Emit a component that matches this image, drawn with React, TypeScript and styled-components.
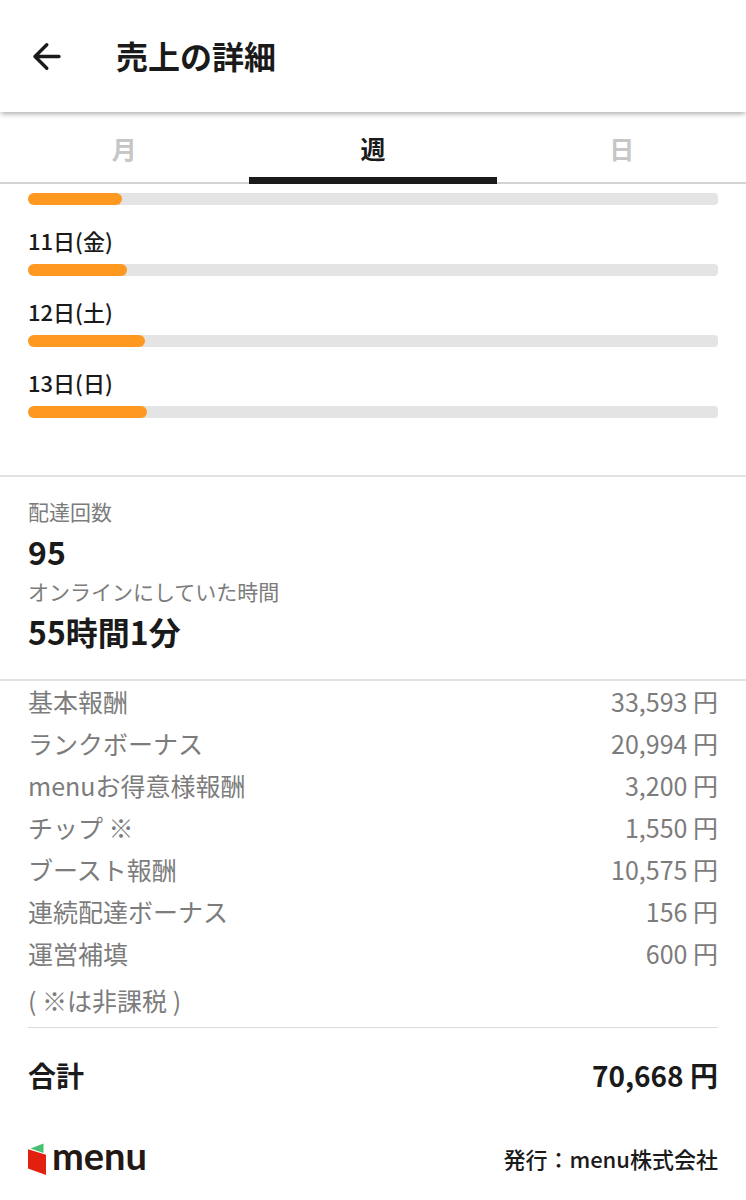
import React, { useState } from "react";
import styled, { createGlobalStyle } from "styled-components";

const ink = "#1a1a1a";
const grey = "#7c7c7c";

const GlobalStyle = createGlobalStyle`
  *, *::before, *::after { box-sizing: border-box; }
  body {
    margin: 0;
    background: #fff;
    color: ${ink};
    font-family: "Noto Sans CJK JP", sans-serif;
  }
`;

const Screen = styled.div`
  display: flex;
  flex-direction: column;
  min-height: 100vh;
`;

const Header = styled.header`
  position: relative;
  display: flex;
  align-items: center;
  gap: 48px;
  height: 112px;
  padding: 0 28px;
  background: #fff;
  box-shadow: 0 3px 5px -1px rgba(0, 0, 0, 0.32);
`;

const BackButton = styled.button`
  display: flex;
  width: 40px;
  height: 40px;
  padding: 0;
  border: 0;
  background: none;
  color: ${ink};
  cursor: pointer;
`;

const Title = styled.h1`
  margin: 0;
  padding-bottom: 2px;
  font-size: 32px;
  line-height: 48px;
  font-weight: 700;
`;

const Tabs = styled.div`
  display: grid;
  grid-template-columns: repeat(3, 1fr);
  height: 72px;
  box-shadow: inset 0 -2px 0 #d2d2d2;
`;

const Tab = styled.button<{ $active: boolean }>`
  padding: 7px 0 0;
  border: 0;
  border-bottom: 7px solid ${(p) => (p.$active ? ink : "transparent")};
  background: none;
  color: ${(p) => (p.$active ? ink : "#c6c6c6")};
  font-family: inherit;
  font-size: 25px;
  line-height: 36px;
  font-weight: 700;
  cursor: pointer;
`;

const Days = styled.ul`
  display: flex;
  flex-direction: column;
  gap: 21px;
  margin: 0;
  padding: 9px 28px 57px;
  list-style: none;
  border-bottom: 2px solid #e2e2e2;
`;

const Day = styled.li`
  display: flex;
  flex-direction: column;
  gap: 10px;
`;

const DayLabel = styled.span`
  font-size: 22px;
  line-height: 28px;
  font-weight: 500;
`;

const Track = styled.div`
  height: 12px;
  border-radius: 6px 4px 4px 6px;
  background: #e4e4e4;
`;

const Fill = styled.div`
  height: 100%;
  border-radius: 6px;
  background: #ff9820;
`;

const Stats = styled.dl`
  margin: 0;
  padding: 18px 28px 24px;
  border-bottom: 2px solid #e2e2e2;
`;

const StatLabel = styled.dt`
  color: ${grey};
  font-size: 21px;
  line-height: 32px;
`;

const StatValue = styled.dd`
  margin: 0;
  font-size: 32px;
  line-height: 48px;
  font-weight: 700;
`;

const Breakdown = styled.section`
  padding: 0 28px;
`;

const Table = styled.table`
  width: 100%;
  border-collapse: collapse;
  color: ${grey};
  font-size: 25px;
  line-height: 40px;
`;

const ItemName = styled.th`
  padding: 0 0 2px;
  font-weight: 400;
  text-align: left;
`;

const ItemAmount = styled.td`
  padding: 0 0 2px;
  text-align: right;
`;

const Note = styled.p`
  margin: 0;
  padding: 5px 0 7px;
  border-bottom: 1px solid #dcdcdc;
  color: ${grey};
  font-size: 25px;
  line-height: 40px;
`;

const Total = styled.div`
  display: flex;
  justify-content: space-between;
  padding: 26px 0 28px;
  font-size: 28px;
  line-height: 42px;
  font-weight: 700;
`;

const Footer = styled.footer`
  display: flex;
  align-items: center;
  justify-content: space-between;
  padding: 11px 28px 20px;
`;

const Issuer = styled.span`
  font-size: 22px;
  line-height: 32px;
  font-weight: 500;
`;

const LogoRow = styled.div`
  display: flex;
  align-items: center;
  gap: 6px;
`;

const LogoWord = styled.span`
  padding-bottom: 6px;
  color: #231815;
  font-family: Lato, sans-serif;
  font-size: 38px;
  line-height: 40px;
  font-weight: 700;
`;

const tabNames = ["月", "週", "日"];

const days = [
  { label: "", name: "10日(木)", percent: 13.6 },
  { label: "11日(金)", name: "11日(金)", percent: 14.3 },
  { label: "12日(土)", name: "12日(土)", percent: 16.9 },
  { label: "13日(日)", name: "13日(日)", percent: 17.2 },
];

const items = [
  ["基本報酬", "33,593 円"],
  ["ランクボーナス", "20,994 円"],
  ["menuお得意様報酬", "3,200 円"],
  ["チップ ※", "1,550 円"],
  ["ブースト報酬", "10,575 円"],
  ["連続配達ボーナス", "156 円"],
  ["運営補填", "600 円"],
];

function BackIcon() {
  return (
    <svg width="40" height="40" viewBox="0 0 40 40" fill="none" stroke="currentColor" strokeWidth="3.4" strokeLinecap="round" strokeLinejoin="round" aria-hidden="true">
      <path d="M31 20.500H7M18.800 8.700 7 20.500l11.800 11.800" />
    </svg>
  );
}

function Logo() {
  return (
    <LogoRow>
      <svg width="18" height="36" viewBox="0 0 18 36" aria-hidden="true">
        <path d="M2.500 8.500 15.500 3.500v9.500z" fill="#45bf72" />
        <path d="M0 9.300l18 5.400V35L0 28.500z" fill="#e2200f" />
      </svg>
      <LogoWord>menu</LogoWord>
    </LogoRow>
  );
}

export default function App() {
  const [active, setActive] = useState("週");
  return (
    <Screen>
      <GlobalStyle />
      <Header>
        <BackButton type="button" aria-label="戻る">
          <BackIcon />
        </BackButton>
        <Title>売上の詳細</Title>
      </Header>
      <Tabs role="tablist">
        {tabNames.map((name) => (
          <Tab key={name} type="button" role="tab" aria-selected={name === active} $active={name === active} onClick={() => setActive(name)}>
            {name}
          </Tab>
        ))}
      </Tabs>
      <main>
        <Days>
          {days.map((day) => (
            <Day key={day.name}>
              {day.label && <DayLabel>{day.label}</DayLabel>}
              <Track role="progressbar" aria-label={day.name} aria-valuenow={day.percent}>
                <Fill style={{ width: `${day.percent}%` }} />
              </Track>
            </Day>
          ))}
        </Days>
        <Stats>
          <StatLabel>配達回数</StatLabel>
          <StatValue>95</StatValue>
          <StatLabel>オンラインにしていた時間</StatLabel>
          <StatValue>55時間1分</StatValue>
        </Stats>
        <Breakdown>
          <Table>
            <tbody>
              {items.map(([name, amount]) => (
                <tr key={name}>
                  <ItemName scope="row">{name}</ItemName>
                  <ItemAmount>{amount}</ItemAmount>
                </tr>
              ))}
            </tbody>
          </Table>
          <Note>( ※は非課税 )</Note>
          <Total>
            <span>合計</span>
            <span>70,668 円</span>
          </Total>
        </Breakdown>
      </main>
      <Footer>
        <Logo />
        <Issuer>発行：menu株式会社</Issuer>
      </Footer>
    </Screen>
  );
}
